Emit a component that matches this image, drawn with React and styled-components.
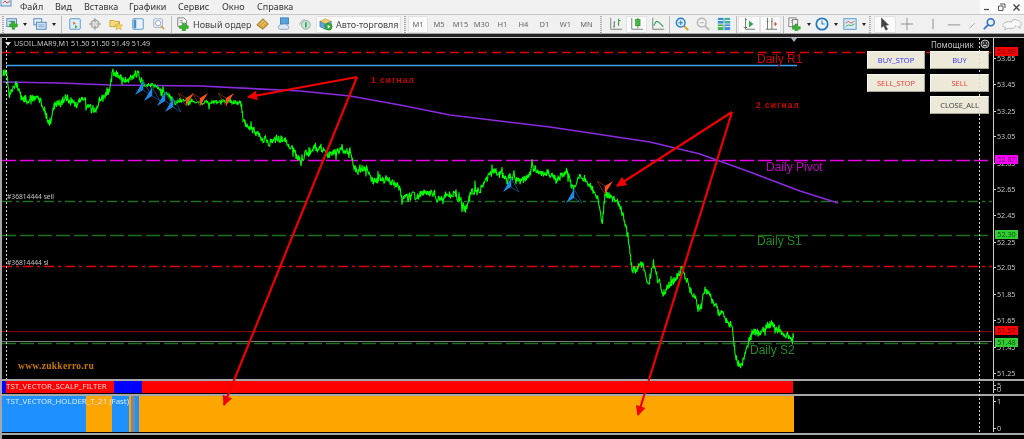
import React, { useMemo } from "react";
import styled, { createGlobalStyle } from "styled-components";

const Global = createGlobalStyle`
  html, body { margin: 0; padding: 0; background: #000; }
  #root { width: 1024px; height: 439px; overflow: hidden; }
`;
const Root = styled.div`
  width: 1024px; height: 439px; display: flex; flex-direction: column; overflow: hidden;
  font-family: "Noto Sans", "DejaVu Sans", sans-serif; background: #f0f0f0; position: relative;
  filter: blur(.35px);
`;
const MenuBar = styled.div`
  height: 14px; flex: none; display: flex; align-items: center; background: #f1f1f1;
  border-bottom: 1px solid #c8c8c8; color: #333; font-size: 9px; line-height: 14px;
`;
const MenuLogo = styled.div`width: 20px; height: 14px; display: flex; align-items: flex-start; flex: none;`;
const MenuItem = styled.span`width: ${p => p.$w}px; flex: none; white-space: nowrap;`;
const WinButtons = styled.div`margin-left: auto; height: 14px; display: flex; align-items: center;`;
const WinBtn = styled.div`width: ${p => p.$w}px; height: 14px; display: flex; align-items: center; justify-content: center; flex: none; background: #fbfbfb;`;
const Toolbar = styled.div`
  height: 18px; flex: none; display: flex; align-items: center; background: #f0f0f0; overflow: hidden;
  border-bottom: 1px solid #a8a8a8; color: #444;
`;
const Slot = styled.div`
  flex: none; width: ${p => p.$w}px; height: 17px; display: flex; align-items: center; justify-content: center;
  font-size: 7.5px; color: #666; box-sizing: border-box;
  ${p => p.$on && `background: #fafafa; box-shadow: inset 0 0 0 1px #e2e2e2;`}
  svg { flex: none; }
`;
const Sep = styled.div`flex: none; width: ${p => p.$w}px; height: 17px; display: flex; justify-content: center;
  &::after { content: ""; width: 1px; height: 17px; background: #bcbcbc; }`;
const Grip = styled.div`flex: none; width: ${p => p.$w}px; height: 17px; display: flex; justify-content: center;
  &::after { content: ""; width: 2px; height: 17px; background: repeating-linear-gradient(#a9a9a9 0 1px, transparent 1px 2px); }`;
const Drop = styled.div`flex: none; width: ${p => p.$w}px; display: flex; justify-content: center;
  &::after { content: ""; border: 2px solid transparent; border-top: 3px solid #222; border-bottom: 0; }`;
const TextTool = styled.div`
  flex: none; width: ${p => p.$w}px; height: 17px; display: flex; align-items: center; gap: ${p => p.$gap}px;
  padding-left: ${p => p.$pad}px; box-sizing: border-box; font-size: 9px; color: #444; white-space: nowrap;
  ${p => p.$on && `background: #fafafa; box-shadow: inset 0 0 0 1px #e2e2e2;`}
`;
const TopGap = styled.div`height: 3px; flex: none; background: #222;`;
const ChartWindow = styled.div`
  flex: 1; position: relative; background: #000; display: flex; flex-direction: column;
  border-left: 2px solid #a6a6a6; overflow: hidden; color: #bdbdbd; font-size: 7.5px;
`;
const MainPane = styled.div`height: 341px; flex: none; display: flex; border-top: 1px solid #c8c8c8;`;
const Plot = styled.div`flex: 1; position: relative; min-width: 0; overflow: hidden;`;
const Axis = styled.div`width: 30px; flex: none; position: relative; border-left: 1px solid #cfcfcf;`;
const Divider = styled.div`height: 2px; flex: none; background: #a8a8a8;`;
const ThinPane = styled.div`height: ${p => p.$h}px; flex: none; display: flex; border-bottom: 1px solid #000;`;
const Bars = styled.div`flex: 1; display: flex; position: relative; min-width: 0;`;
const Segment = styled.div`width: ${p => p.$w}px; flex: none; background: ${p => p.$c};`;
const PaneTitle = styled.span`
  position: absolute; left: 4px; top: ${p => p.$top}px; color: ${p => p.$c}; font-size: 7.9px; line-height: 9px; white-space: nowrap;
`;
const Rest = styled.div`flex: 1; background: #000;`;
const AxisTick = styled.span`
  position: absolute; left: 3px; top: ${p => p.$y - 5}px; line-height: 10px; font-size: 7.2px; color: #c4c4c4;
  &::before { content: ""; position: absolute; left: -3px; top: 5px; width: 2px; height: 1px; background: #cfcfcf; }
`;
const AxisTag = styled.span`
  position: absolute; left: 1px; top: ${p => p.$y - 5}px; width: 23px; height: 9px; line-height: 9px; text-align: center;
  font-size: 7.2px; background: ${p => p.$bg}; color: ${p => p.$fg};
`;
const ChartLabel = styled.span`
  position: absolute; left: ${p => p.$x}px; top: ${p => p.$y}px; white-space: nowrap; line-height: 1;
  font-size: ${p => p.$size}px; color: ${p => p.$c}; font-family: "Liberation Sans", sans-serif;
`;
const Note = styled(ChartLabel)`font-weight: bold; letter-spacing: 1px;`;
const Site = styled(ChartLabel)`font-family: "Liberation Serif", serif; font-weight: bold; letter-spacing: .3px;`;
const Small = styled.span`
  position: absolute; left: ${p => p.$x}px; top: ${p => p.$y}px; white-space: nowrap; font-size: ${p => p.$size}px; line-height: 9px; color: #c4c4c4;
`;
const Overlay = styled.svg`position: absolute; left: -2px; top: 0; width: 1024px; height: 402px; pointer-events: none;`;
const ChartSvg = styled.svg`position: absolute; left: -2px; top: -1px; width: 1024px; height: 402px;`;
const TradeBtn = styled.div`
  position: absolute; left: ${p => p.$x}px; top: ${p => p.$y}px; width: ${p => p.$w}px; height: 18px; box-sizing: border-box;
  background: #ece9d8; color: ${p => p.$c}; font-size: 7.5px; line-height: 17px; text-align: center;
  border: 1px solid; border-color: #f8f7f0 #a9a799 #a9a799 #f8f7f0;
`;
const Smile = styled.svg`position: absolute; left: 978px; top: 2px;`;
const Triangle = styled.div`
  position: absolute; left: ${p => p.$x}px; top: ${p => p.$y}px; border: 3px solid transparent; border-top: 4px solid ${p => p.$c}; border-bottom: 0;
`;

const Ic = ({ children, w = 14, h = 14 }) => <svg width={w} height={h} viewBox="0 0 16 16">{children}</svg>;
const I = {
  newChart: <Ic><rect x="1" y="2" width="11" height="9" fill="#cfe3f6" stroke="#4b7fb6" /><path d="M3 5h7" stroke="#4b7fb6" /><path d="M6 5h4v3h3v3h-3v3H7v-3H4V8h2z" fill="#37b52e" stroke="#1d7d1a" strokeWidth=".5" /></Ic>,
  profile: <Ic><rect x="1" y="2" width="9" height="7" fill="#e1edf9" stroke="#4b7fb6" /><rect x="4" y="6" width="11" height="8" fill="#cfe3f6" stroke="#4b7fb6" /><path d="M6 9h7M6 11h7" stroke="#7aa5d1" /></Ic>,
  market: <Ic><rect x="2" y="2" width="12" height="12" rx="1" fill="#dfeefb" stroke="#4b8fc8" /><path d="M6 5l3 2-3 2z" fill="#e3652e" /><path d="M8 9l3 2-3 2z" fill="#3aa53a" /></Ic>,
  cross: <Ic><circle cx="8" cy="8" r="4.5" fill="#ddd" stroke="#a0a0a0" strokeWidth="1.3" /><path d="M8 1v5M8 10v5M1 8h5M10 8h5" stroke="#a0a0a0" strokeWidth="1.4" /></Ic>,
  star: <Ic><path d="M1 4h5l1 1h5v6H1z" fill="#f3d97a" stroke="#c9a33c" /><path d="M11 6l1.5 3 3 .4-2.2 2 .6 3-2.9-1.5-2.8 1.5.5-3-2.1-2 3-.4z" fill="#f6d558" stroke="#c39a2c" strokeWidth=".6" /></Ic>,
  nav: <Ic><rect x="2" y="2" width="12" height="12" rx="1" fill="#e9f2fb" stroke="#4b8fc8" /><rect x="3" y="3" width="3" height="10" fill="#4b8fc8" /></Ic>,
  alarm: <Ic><rect x="2" y="2" width="10" height="10" rx="1" fill="#e8eef4" stroke="#9db2c6" /><circle cx="7" cy="7" r="3" fill="#fff" stroke="#8aa0b6" /><path d="M10 10l4 4" stroke="#c9a33c" strokeWidth="1.6" /></Ic>,
  order: <Ic><path d="M2 1h7l3 3v7H2z" fill="#f6f6f6" stroke="#777" /><path d="M4 4h4M4 6h4" stroke="#999" /><path d="M7 7h4v3h3v3h-3v3H7v-3H4v-3h3z" fill="#37b52e" stroke="#1d7d1a" strokeWidth=".5" /></Ic>,
  book: <Ic><path d="M1 9l7-7 6 6-6 6z" fill="#d9a83c" stroke="#8a6a20" /><path d="M4 9l5-5M6 11l5-5" stroke="#f0d48a" /></Ic>,
  cloud: <Ic><rect x="4" y="1" width="9" height="7" fill="#5aa1e0" stroke="#3a7ab8" /><path d="M2 11c0-2 3-3 4-2 1-2 6-1 6 1 2 0 2 4 0 4H4c-2 0-3-2-2-3z" fill="#dbe8f4" stroke="#7f9cba" /></Ic>,
  signal: <Ic><path d="M2 9a6 6 0 0 1 6-6M4 9a4 4 0 0 1 4-4" stroke="#9ab0b8" fill="none" /><circle cx="9" cy="9" r="5" fill="#cfe4d4" stroke="#88aa99" /><path d="M8 6h2v6H8z" fill="#3aa56a" /></Ic>,
  auto: <Ic><path d="M1 5l6-3 7 3-7 3z" fill="#f1d25e" stroke="#a68a2e" strokeWidth=".6" /><path d="M1 5v6l6 3V8z" fill="#5fa2d8" stroke="#336c9c" strokeWidth=".6" /><path d="M14 5v4l-7 5V8z" fill="#7db9e6" stroke="#336c9c" strokeWidth=".6" /><circle cx="11" cy="11" r="4" fill="#36ad3a" stroke="#1d7d1a" strokeWidth=".6" /><path d="M10 9l3 2-3 2z" fill="#fff" /></Ic>,
  bars: <Ic><path d="M2 1v13h13" stroke="#6a7a6a" fill="none" /><path d="M6 5v7M5 11h1M6 6h1" stroke="#556" /><path d="M11 2v8M10 8h1M11 4h2" stroke="#22a52a" strokeWidth="1.2" /></Ic>,
  candles: <Ic><path d="M2 1v13h13" stroke="#6a7a6a" fill="none" /><path d="M9 1v12" stroke="#1d7d1a" /><rect x="6.5" y="3" width="5" height="7" fill="#3cc03c" stroke="#1d7d1a" strokeWidth=".6" /></Ic>,
  line: <Ic><path d="M2 1v13h13" stroke="#6a7a6a" fill="none" /><path d="M3 10l3-5 3 1 5 5" stroke="#2f9a5e" fill="none" strokeWidth="1.2" /></Ic>,
  zoomIn: <Ic><path d="M10 10l5 5" stroke="#d4a52e" strokeWidth="2.4" /><circle cx="6.5" cy="6.5" r="5" fill="#d8ecfb" stroke="#2b7fc4" strokeWidth="1.6" /><path d="M4 6.5h5M6.5 4v5" stroke="#2b7fc4" strokeWidth="1.2" /></Ic>,
  zoomOut: <Ic><path d="M10 10l5 5" stroke="#bbb" strokeWidth="2.4" /><circle cx="6.5" cy="6.5" r="5" fill="#f2f2f2" stroke="#b5b5b5" strokeWidth="1.6" /><path d="M4 6.5h5" stroke="#b5b5b5" strokeWidth="1.2" /></Ic>,
  tile: <Ic><rect x="1" y="1" width="6.5" height="6.5" fill="#3c8fd4" /><rect x="8.5" y="1" width="6.5" height="6.5" fill="#3db0a0" /><rect x="1" y="8.5" width="6.5" height="6.5" fill="#44b050" /><rect x="8.5" y="8.5" width="6.5" height="6.5" fill="#3c8fd4" /><path d="M1 4h6M9 4h6M1 11h6M9 11h6" stroke="#fff" /></Ic>,
  shift: <Ic><path d="M4 1v13h11" stroke="#5f6f5f" fill="none" /><path d="M2 12h4M4 3h2" stroke="#5f6f5f" /><path d="M8 4l5 4-5 4z" fill="#2ea84a" /></Ic>,
  scroll: <Ic><path d="M4 1v13M9 1v13M2 14h13" stroke="#5f6f5f" fill="none" /><path d="M3 5h2M8 5h2" stroke="#5f6f5f" /><path d="M11 8h4M13 6v4" stroke="#d5533a" strokeWidth="1.4" /></Ic>,
  indic: <Ic><rect x="1" y="1" width="8" height="10" fill="#fff" stroke="#777" /><path d="M3 4h4M3 6h4" stroke="#999" /><rect x="5" y="3" width="6" height="7" fill="#f2f2f2" stroke="#777" /><path d="M8 8h3v3h3v3h-3v3H8v-3H5v-3h3z" fill="#37b52e" stroke="#1d7d1a" strokeWidth=".5" /></Ic>,
  clock: <Ic><circle cx="8" cy="8" r="6.5" fill="#eef6fc" stroke="#2378bb" strokeWidth="2" /><path d="M8 4v4h3" stroke="#2378bb" strokeWidth="1.2" fill="none" /></Ic>,
  tpl: <Ic><rect x="1" y="2" width="14" height="12" fill="#d9ecf8" stroke="#4b8fc8" /><path d="M3 7l3-2 3 2 4-2" stroke="#d5533a" fill="none" /><path d="M3 11l3-2 3 1 4-2" stroke="#3aa53a" fill="none" /></Ic>,
  cursor: <Ic><path d="M4 1l8 8-3.6.4L11 14l-2 1-2.5-5L4 12z" fill="#444" stroke="#222" strokeWidth=".5" /></Ic>,
  plus: <Ic><path d="M8 1v14M1 8h14" stroke="#888" /></Ic>,
  vline: <Ic><path d="M8 2v12" stroke="#888" /></Ic>,
  hline: <Ic><path d="M1 9h14" stroke="#888" /></Ic>,
  dline: <Ic><path d="M4 13l6-6" stroke="#999" /></Ic>,
  find: <Ic><circle cx="10" cy="6" r="4" fill="#e7f1fb" stroke="#2f6fc4" strokeWidth="1.8" /><path d="M7 9l-5 5" stroke="#2f6fc4" strokeWidth="2" /></Ic>,
  chat: <svg width="22" height="13" viewBox="0 0 24 14"><path d="M2 8c0-3 4-4 7-4s7 1 7 4-4 4-8 3l-4 2 1-3c-2 0-3-1-3-2z" fill="#f7f7f7" stroke="#b5b5b5" /><path d="M11 5c0-3 4-4 6-3s6 2 5 5c0 1-1 2-2 2l1 2-3-2" fill="#f7f7f7" stroke="#b5b5b5" /></svg>,
};

const keyPoints = [[3,75],[5,72],[7,78],[9,98],[13,82],[18,88],[22,100],[30,97],[40,100],[46,115],[49,122],[55,105],[65,98],[75,104],[85,100],[91,112],[100,100],[108,90],[112,72],[117,78],[128,80],[137,72],[145,85],[155,85],[165,93],[175,103],[185,99],[195,103],[205,102],[215,102],[228,100],[240,103],[244,122],[248,130],[260,135],[270,140],[285,137],[293,150],[298,160],[305,154],[315,150],[330,153],[350,151],[355,172],[365,168],[372,180],[380,176],[395,181],[405,200],[420,194],[440,197],[455,195],[465,210],[472,190],[480,192],[492,171],[505,178],[515,178],[525,180],[532,168],[540,173],[555,177],[567,171],[573,192],[578,176],[590,186],[597,198],[602,222],[605,193],[617,199],[623,215],[627,236],[632,268],[643,262],[648,286],[653,264],[663,296],[672,282],[682,267],[687,283],[700,312],[705,288],[718,312],[728,322],[732,326],[735,356],[741,365],[748,345],[753,332],[762,330],[772,325],[780,335],[793,340]];

function pricePath() {
  let s = 37;
  const rnd = () => { s = (s * 16807) % 2147483647; return s / 2147483647; };
  let d = "M3 75", i = 0, wob = 0;
  for (let x = 3; x <= 793; x += 1) {
    while (i < keyPoints.length - 2 && keyPoints[i + 1][0] < x) i++;
    const [a, b] = keyPoints[i], [c, e] = keyPoints[i + 1];
    const y = b + (e - b) * (x - a) / (c - a);
    const amp = x > 145 && x < 240 ? 3 : 7;
    wob = wob * .7 + (rnd() - .5) * (x > 145 && x < 240 ? 1.5 : 4);
    const spike = rnd() < .16 ? (rnd() - .5) * 13 : 0;
    d += `L${x} ${(y + wob + (rnd() - .5) * amp + spike).toFixed(1)}L${x + .5} ${(y + wob - (rnd() - .5) * amp).toFixed(1)}`;
  }
  return d;
}

const Fractal = ({ x, y, up }) => up ? (
  <g>
    <path d={`M${x} ${y - 7}L${x + 8} ${y + 7}L${x} ${y + 2}z`} fill="none" stroke="#14507e" strokeWidth=".9" />
    <path d={`M${x} ${y - 7}L${x - 8} ${y + 7}L${x} ${y + 2}z`} fill="#1e88e5" />
  </g>
) : (
  <g>
    <path d={`M${x} ${y + 7}L${x - 8} ${y - 6}L${x} ${y - 1}z`} fill="none" stroke="#7a2a0c" strokeWidth=".9" />
    <path d={`M${x} ${y + 7}L${x + 8} ${y - 6}L${x} ${y - 1}z`} fill="#f4511e" />
  </g>
);

const axisValues = [["53.65",58],["53.45",84],["53.25",111],["53.05",136],["52.85",163],["52.65",189],["52.45",215],["52.25",242],["52.05",267],["51.85",294],["51.65",320],["51.45",347],["51.25",373]];
const tags = [["53.69",52,"#ff0000","#5a0000"],["52.87",160,"#ff00ff","#5a005a"],["52.30",235,"#32cd32","#0b4d0b"],["51.57",331,"#ff0000","#5a0000"],["51.48",343,"#32cd32","#0b4d0b"]];
const OFF = 37;

const ArrowHead = ({ id }) => (
  <marker id={id} viewBox="0 0 10 10" refX="9" refY="5" markerWidth="13" markerHeight="10" markerUnits="userSpaceOnUse" orient="auto">
    <path d="M0 0L10 5L0 10z" fill="#f00000" />
  </marker>
);

export default function App() {
  const price = useMemo(pricePath, []);
  const tf = ["M1","M5","M15","M30","H1","H4","D1","W1","MN"];
  return (
    <Root>
      <Global />
      <MenuBar>
        <MenuLogo>
          <svg width="13" height="9" viewBox="0 0 13 9"><rect x="1" y="-3" width="10" height="9" fill="#dbe9f7" stroke="#5c8fc4" /><path d="M3 3l2-2 2 2 3-2" stroke="#d5533a" fill="none" /></svg>
        </MenuLogo>
        <MenuItem $w={35}>Файл</MenuItem>
        <MenuItem $w={29}>Вид</MenuItem>
        <MenuItem $w={45}>Вставка</MenuItem>
        <MenuItem $w={49}>Графики</MenuItem>
        <MenuItem $w={44}>Сервис</MenuItem>
        <MenuItem $w={35}>Окно</MenuItem>
        <MenuItem $w={40}>Справка</MenuItem>
        <WinButtons>
          <WinBtn $w={14}><svg width="8" height="8"><path d="M1 6.5h5" stroke="#444" strokeWidth="1.2" /></svg></WinBtn>
          <WinBtn $w={15}><svg width="9" height="9"><path d="M3 1h5v4M1.5 3h4.5v4.5H1.5z" stroke="#555" fill="none" /></svg></WinBtn>
          <WinBtn $w={15}><svg width="9" height="9"><path d="M1.5 1.5l6 6M7.5 1.5l-6 6" stroke="#444" strokeWidth="1.4" /></svg></WinBtn>
        </WinButtons>
      </MenuBar>
      <Toolbar>
        <Grip $w={6} />
        <Slot $w={14}>{I.newChart}</Slot><Drop $w={10} />
        <Slot $w={20}>{I.profile}</Slot><Drop $w={7} />
        <Sep $w={8} />
        <Slot $w={19}>{I.market}</Slot>
        <Slot $w={21}>{I.cross}</Slot>
        <Slot $w={22}>{I.star}</Slot>
        <Slot $w={21}>{I.nav}</Slot>
        <Slot $w={22}>{I.alarm}</Slot>
        <Sep $w={2} />
        <TextTool $w={81} $gap={3} $pad={4}>{I.order}<span>Новый ордер</span></TextTool>
        <Slot $w={20}>{I.book}</Slot>
        <Slot $w={21}>{I.cloud}</Slot>
        <Slot $w={22}>{I.signal}</Slot>
        <TextTool $w={85} $gap={3} $pad={3} $on>{I.auto}<span>Авто-торговля</span></TextTool>
        <Grip $w={7} />
        {tf.map((t, i) => <Slot key={t} $w={i === 0 ? 20 : i === 1 ? 22 : 21} $on={i === 0}>{t}</Slot>)}
        <Grip $w={8} />
        <Slot $w={21}>{I.bars}</Slot>
        <Slot $w={21} $on>{I.candles}</Slot>
        <Slot $w={21}>{I.line}</Slot>
        <Sep $w={2} />
        <Slot $w={23}>{I.zoomIn}</Slot>
        <Slot $w={20}>{I.zoomOut}</Slot>
        <Slot $w={21}>{I.tile}</Slot>
        <Sep $w={4} />
        <Slot $w={22} $on>{I.shift}</Slot>
        <Slot $w={21} $on>{I.scroll}</Slot>
        <Sep $w={4} />
        <Slot $w={20}>{I.indic}</Slot><Drop $w={7} />
        <Slot $w={20}>{I.clock}</Slot><Drop $w={7} />
        <Slot $w={22}>{I.tpl}</Slot><Drop $w={5} />
        <Grip $w={8} />
        <Slot $w={22} $on>{I.cursor}</Slot>
        <Slot $w={22}>{I.plus}</Slot>
        <Slot $w={30}>{I.vline}</Slot>
        <Slot $w={12}>{I.hline}</Slot>
        <Slot $w={26}>{I.dline}</Slot>
        <Slot $w={6}>{I.find}</Slot>
        <Slot $w={40}>{I.chat}</Slot>
      </Toolbar>
      <TopGap />
      <ChartWindow>
        <MainPane>
          <Plot>
            <ChartSvg viewBox={`0 ${OFF} 1024 402`}>
              <g fill="none" strokeWidth="1.4">
                <path d="M2 52.5H991" stroke="#e00000" strokeDasharray="9 5" />
                <path d="M6 65.5H797" stroke="#3f9ff0" />
                <path d="M2 160.5H992" stroke="#e800e8" strokeDasharray="14 4" />
                <path d="M2 201.5H992" stroke="#1c701c" strokeDasharray="10 4 3 4" />
                <path d="M2 235.5H992" stroke="#1c701c" strokeDasharray="14 4" />
                <path d="M2 266.5H992" stroke="#e00000" strokeDasharray="10 4 3 4" />
                <path d="M2 331.5H992" stroke="#8b0000" strokeWidth="1" />
                <path d="M2 341.5H992" stroke="#7a7a7a" strokeWidth="1" />
                <path d="M2 343.5H992" stroke="#1c701c" strokeDasharray="14 4" />
                <path d="M3 82L60 83L110 85L200 86L300 91L350 96L400 105L450 115L550 127L650 142L700 154L750 172L800 191L838 203" stroke="#8a2be2" strokeWidth="1.6" />
                <path d={price} stroke="#00ff00" strokeWidth="1.1" />
              </g>
              <Fractal up x={143} y={88} /><Fractal up x={152} y={94} /><Fractal up x={165} y={99} /><Fractal up x={173} y={105} />
              <Fractal x={186} y={99} /><Fractal x={200} y={99} /><Fractal x={226} y={99} />
              <Fractal up x={511} y={185} /><Fractal up x={574} y={196} /><Fractal x={605} y={187} />
            </ChartSvg>
            <ChartLabel $x={755} $y={15} $size={12} $c="#d00000">Daily R1</ChartLabel>
            <ChartLabel $x={764} $y={123} $size={12} $c="#c000c0">Daily Pivot</ChartLabel>
            <ChartLabel $x={755} $y={197} $size={12} $c="#228b22">Daily S1</ChartLabel>
            <ChartLabel $x={748} $y={306} $size={12} $c="#228b22">Daily S2</ChartLabel>
            <Small $x={5} $y={154} $size={6.7}>#36814444 sell</Small>
            <Small $x={5} $y={220} $size={6.7}>#36814444 sl</Small>
            <Small $x={12} $y={1} $size={7.2}>USOIL.MAR9,M1&nbsp;51.50 51.50 51.49 51.49</Small>
            <Small $x={929} $y={2} $size={8}>Помощник</Small>
            <Note $x={369} $y={38} $size={8.5} $c="#d00000">1 сигнал</Note>
            <Note $x={754} $y={63} $size={8.5} $c="#d00000">2 сигнал</Note>
            <Site $x={16} $y={324} $size={9.5} $c="#c87a00">www.zukkerro.ru</Site>
            <TradeBtn $x={865} $y={13} $w={58} $c="#3a3af0">BUY_STOP</TradeBtn>
            <TradeBtn $x={928} $y={13} $w={59} $c="#3a3af0">BUY</TradeBtn>
            <TradeBtn $x={865} $y={36} $w={58} $c="#f04040">SELL_STOP</TradeBtn>
            <TradeBtn $x={928} $y={36} $w={59} $c="#f04040">SELL</TradeBtn>
            <TradeBtn $x={928} $y={58} $w={59} $c="#444">CLOSE_ALL</TradeBtn>
          </Plot>
          <Axis>
            {axisValues.map(([v, y]) => <AxisTick key={v} $y={y - 38}>{v}</AxisTick>)}
            {tags.map(([v, y, bg, fg]) => <AxisTag key={v + y} $y={y - 38} $bg={bg} $fg={fg}>{v}</AxisTag>)}
          </Axis>
        </MainPane>
        <Divider />
        <ThinPane $h={12}>
          <Bars>
            <Segment $w={4} $c="#0000ff" /><Segment $w={108} $c="#ff0000" /><Segment $w={28} $c="#0000ff" /><Segment $w={651} $c="#ff0000" /><Rest />
            <PaneTitle $top={1} $c="#ffd0d0">TST_VECTOR_SCALP_FILTER</PaneTitle>
          </Bars>
          <Axis><AxisTick $y={4}>5</AxisTick><AxisTick $y={8}>0</AxisTick></Axis>
        </ThinPane>
        <Divider />
        <ThinPane $h={36}>
          <Bars>
            <Segment $w={84} $c="#1e90ff" /><Segment $w={26} $c="#ffa500" /><Segment $w={17} $c="#1e90ff" /><Segment $w={2} $c="#ffa500" /><Segment $w={4} $c="#808890" /><Segment $w={4} $c="#1e90ff" /><Segment $w={655} $c="#ffa500" /><Rest />
            <PaneTitle $top={1} $c="#d8e8f8">TST_VECTOR_HOLDER_T_21 (Fast)</PaneTitle>
          </Bars>
          <Axis><AxisTick $y={5}>1</AxisTick><AxisTick $y={32}>0</AxisTick></Axis>
        </ThinPane>
        <Divider />
        <Overlay viewBox={`0 ${OFF} 1024 402`}>
          <defs><ArrowHead id="hd" /></defs>
          <path d="M6.5 38V379M979.5 38V433" stroke="#d8d8d8" strokeDasharray="2 2" />
          <g stroke="#ee0000" strokeWidth="2.2" fill="none">
            <path d="M357 77L248 97" markerEnd="url(#hd)" />
            <path d="M357 77L224 405" markerEnd="url(#hd)" />
            <path d="M732 112L617 186" markerEnd="url(#hd)" />
            <path d="M732 112L638 415" markerEnd="url(#hd)" />
          </g>
        </Overlay>
        <Triangle $x={3} $y={5} $c="#e8e8e8" />
        <Triangle $x={789} $y={1} $c="#9ab0c0" />
        <Smile width="10" height="10" viewBox="0 0 10 10"><circle cx="5" cy="5" r="4" fill="#333" stroke="#bbb" /><path d="M3 4h1M6 4h1M3 7q2-1.5 4 0" stroke="#ddd" fill="none" /></Smile>
      </ChartWindow>
    </Root>
  );
}
